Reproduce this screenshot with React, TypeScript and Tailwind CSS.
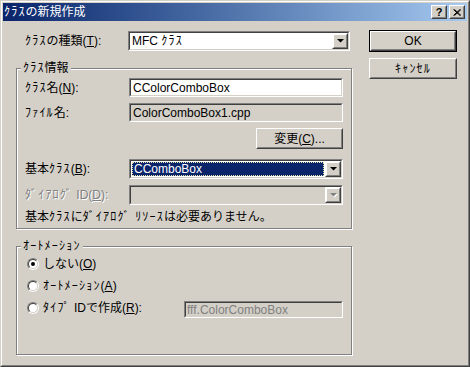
import React from "react";

const font = "font-['Liberation_Sans','Noto_Sans_CJK_JP',sans-serif]";

// half-width katakana run, spaced out a little to match the old UI font
function K({ children }: { children: React.ReactNode }) {
  return <span className="tracking-[1.2px]">{children}</span>;
}

function Raised({ className = "", inner = "", children }: { className?: string; inner?: string; children?: React.ReactNode }) {
  return (
    <div className={`border border-t-white border-l-white border-r-[#404040] border-b-[#404040] ${className}`}>
      <div className={`h-full border border-t-[#d4d0c8] border-l-[#d4d0c8] border-r-[#808080] border-b-[#808080] ${inner}`}>
        {children}
      </div>
    </div>
  );
}

function Sunken({ className = "", inner = "", children }: { className?: string; inner?: string; children?: React.ReactNode }) {
  return (
    <div className={`border border-t-[#808080] border-l-[#808080] border-r-white border-b-white ${className}`}>
      <div className={`h-full border border-t-[#404040] border-l-[#404040] border-r-[#d4d0c8] border-b-[#d4d0c8] ${inner}`}>
        {children}
      </div>
    </div>
  );
}

function Arrow({ disabled }: { disabled?: boolean }) {
  return (
    <svg width="7" height="4" viewBox="0 0 7 4" className="overflow-visible">
      {disabled && <path d="M1 1h7L4.5 4.5z" fill="#fff" />}
      <path d="M0 0h7L3.5 3.5z" fill={disabled ? "#808080" : "#000"} />
    </svg>
  );
}

function Combo({ value, selected, disabled, className = "" }: { value?: React.ReactNode; selected?: boolean; disabled?: boolean; className?: string }) {
  return (
    <Sunken className={`h-5 ${className}`} inner={`flex ${disabled ? "bg-[#d4d0c8]" : "bg-white"}`}>
      <div className="flex-1 flex items-center min-w-0">
        {selected ? (
          <div className="m-px h-[14px] flex-1 flex items-center bg-[#0a246a] text-white border border-dotted border-[#e8e4b0] pl-px">
            {value}
          </div>
        ) : (
          <span className="pl-[2px]">{value}</span>
        )}
      </div>
      <Raised className="w-4 h-4 border-t-[#d4d0c8] border-l-[#d4d0c8]" inner="flex items-center justify-center bg-[#d4d0c8] border-t-white border-l-white">
        <Arrow disabled={disabled} />
      </Raised>
    </Sunken>
  );
}

function Btn({ children, def, className = "" }: { children: React.ReactNode; def?: boolean; className?: string }) {
  if (def) {
    return (
      <div className={`border border-black ${className}`}>
        <Raised className="h-full" inner="flex items-center justify-center">
          {children}
        </Raised>
      </div>
    );
  }
  return (
    <Raised className={className} inner="flex items-center justify-center">
      {children}
    </Raised>
  );
}

function Group({ label, className = "", children }: { label: React.ReactNode; className?: string; children: React.ReactNode }) {
  return (
    <div className={`relative border border-[#808080] shadow-[inset_1px_1px_0_#fff,1px_1px_0_#fff] ${className}`}>
      <span className="absolute -top-[8px] left-[4px] px-[2px] bg-[#d4d0c8] leading-[14px]">{label}</span>
      {children}
    </div>
  );
}

function Radio({ checked }: { checked?: boolean }) {
  return (
    <div className="w-3 h-3 rounded-full border border-t-[#808080] border-l-[#808080] border-r-white border-b-white">
      <div className="h-full rounded-full border border-t-[#404040] border-l-[#404040] border-r-[#d4d0c8] border-b-[#d4d0c8] bg-white flex items-center justify-center">
        {checked && <div className="w-1 h-1 rounded-full bg-black" />}
      </div>
    </div>
  );
}

export default function App() {
  const dim = "text-[#808080] [text-shadow:1px_1px_0_#fff]";
  return (
    <div className={`w-[470px] h-[367px] bg-[#d4d0c8] text-black text-[12px] leading-[14px] ${font} border border-t-[#d4d0c8] border-l-[#d4d0c8] border-r-[#404040] border-b-[#404040]`}>
      <div className="h-full flex flex-col p-px border border-t-white border-l-white border-r-[#808080] border-b-[#808080]">
        {/* title bar */}
        <div className="h-[18px] flex items-center bg-linear-to-r from-[#0a246a] to-[#a6caf0] pl-[1px] pr-[2px]">
          <span className="text-white flex-1">
            <K>ｸﾗｽ</K>の新規作成
          </span>
          <Raised className="w-4 h-[14px]" inner="flex items-center justify-center bg-[#d4d0c8]">
            <span className="text-[11px] font-bold leading-none font-['Liberation_Sans',sans-serif]">?</span>
          </Raised>
          <Raised className="w-4 h-[14px] ml-[2px]" inner="flex items-center justify-center bg-[#d4d0c8]">
            <svg width="8" height="7" viewBox="0 0 8 7">
              <path d="M0.5 0.5L7 6.5M1.5 0.5L8 6.5M7 0.5L0.5 6.5M8 0.5L1.5 6.5" stroke="#000" strokeWidth="1" />
            </svg>
          </Raised>
        </div>

        {/* body */}
        <div className="flex pl-[13px] pt-[9px]">
          <div className="w-[336px]">
            <div className="flex items-center h-5 mt-px">
              <span className="pl-[9px] w-[112px]">
                <K>ｸﾗｽ</K>の種類(<u>T</u>):
              </span>
              <Combo
                value={
                  <>
                    MFC <K>ｸﾗｽ</K>
                  </>
                }
                className="w-[222px]"
              />
            </div>

            <Group label={<><K>ｸﾗｽ</K>情報</>} className="mt-[17px] h-[161px]">
              <div className="pl-[8px] pr-[8px] pt-[9px]">
                <div className="flex items-center h-[19px]">
                  <span className="w-[104px]">
                    <K>ｸﾗｽ</K>名(<u>N</u>):
                  </span>
                  <Sunken className="flex-1 h-[19px]" inner="bg-white flex items-center pl-[2px]">
                    CColorComboBox
                  </Sunken>
                </div>
                <div className="flex items-center h-[19px] mt-[6px]">
                  <span className="w-[104px]">
                    <K>ﾌｧｲﾙ</K>名:
                  </span>
                  <Sunken className="flex-1 h-[19px]" inner="bg-[#d4d0c8] flex items-center pl-[2px]">
                    ColorComboBox1.cpp
                  </Sunken>
                </div>
                <div className="flex justify-end mt-[6px]">
                  <Btn className="w-[87px] h-[21px]">
                    変更(<u>C</u>)...
                  </Btn>
                </div>
                <div className="flex items-center h-5 mt-[10px]">
                  <span className="w-[104px]">
                    基本<K>ｸﾗｽ</K>(<u>B</u>):
                  </span>
                  <Combo value="CComboBox" selected className="flex-1" />
                </div>
                <div className="flex items-center h-5 mt-[6px]">
                  <span className={`w-[104px] ${dim}`}>
                    <K>ﾀﾞｲｱﾛｸﾞ</K> ID(<u>D</u>):
                  </span>
                  <Combo disabled className="flex-1" />
                </div>
                <div className="mt-[5px]">
                  基本<K>ｸﾗｽ</K>に<K>ﾀﾞｲｱﾛｸﾞ ﾘｿｰｽ</K>は必要ありません。
                </div>
              </div>
            </Group>

            <Group label={<K>ｵｰﾄﾒｰｼｮﾝ</K>} className="mt-[17px] h-[109px]">
              <div className="pl-[10px] pr-[8px] pt-[9px] flex flex-col gap-[6px]">
                <div className="flex items-center h-4 gap-[4px]">
                  <Radio checked />
                  <span>
                    しない(<u>O</u>)
                  </span>
                </div>
                <div className="flex items-center h-4 gap-[4px]">
                  <Radio />
                  <span>
                    <K>ｵｰﾄﾒｰｼｮﾝ</K>(<u>A</u>)
                  </span>
                </div>
                <div className="flex items-center h-4 gap-[4px]">
                  <Radio />
                  <span>
                    <K>ﾀｲﾌﾟ</K> IDで作成(<u>R</u>):
                  </span>
                  <Sunken className="ml-auto w-[159px] h-[17px] mt-[3px]" inner="bg-[#d4d0c8] flex items-center pl-[1px] text-[#808080]">
                    fff.ColorComboBox
                  </Sunken>
                </div>
              </div>
            </Group>
          </div>

          <div className="ml-[17px] w-[88px]">
            <Btn def className="h-[22px]">
              OK
            </Btn>
            <Btn className="h-[21px] mt-[6px]">
              <K>ｷｬﾝｾﾙ</K>
            </Btn>
          </div>
        </div>
      </div>
    </div>
  );
}
